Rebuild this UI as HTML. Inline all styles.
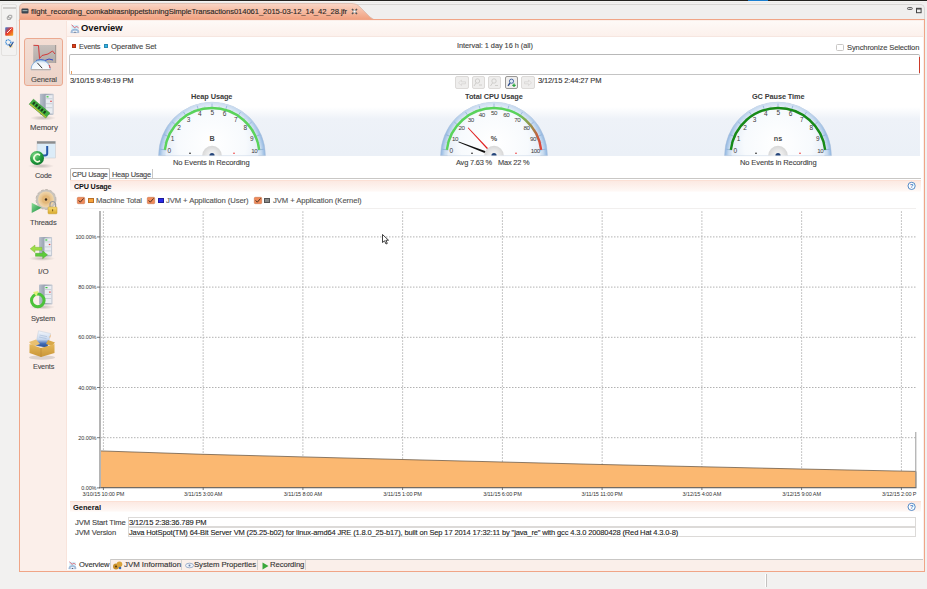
<!DOCTYPE html>
<html><head><meta charset="utf-8">
<style>
*{margin:0;padding:0;box-sizing:border-box}
html,body{width:927px;height:589px;overflow:hidden;background:#f2f1f0;font-family:"Liberation Sans",sans-serif}
.a{position:absolute}
.t{position:absolute;white-space:nowrap;line-height:1;font-family:"Liberation Sans",sans-serif}
svg{position:absolute;overflow:visible}
</style></head><body>
<div class="a" style="left:0px;top:0px;width:927px;height:589px;background:#f2f1f0"></div>
<div class="a" style="left:0px;top:0px;width:927px;height:1px;background:#23221f"></div>
<div class="a" style="left:0px;top:1px;width:927px;height:2px;background:linear-gradient(#f7f6f5,#e9e8e6)"></div>
<div class="a" style="left:748px;top:0px;width:20px;height:1px;background:#1b7fd0"></div>
<div class="a" style="left:1px;top:4px;width:16px;height:52px;background:#f3f2f1;border:1px solid #e3e1df;border-radius:2px"></div>
<div class="a" style="left:3px;top:7px;width:13px;height:1.5px;background:#cfcdcb"></div>
<svg class="a" style="left:1px;top:4px" width="17" height="52" viewBox="1 4 17 52"><rect x="7.3" y="16.6" width="3.4" height="2.8" rx="0.5" fill="none" stroke="#8a8a8a" stroke-width="0.8"/><rect x="8.6" y="15.3" width="3.2" height="2.6" rx="0.5" fill="#f3f2f1" stroke="#8a8a8a" stroke-width="0.8"/><defs><linearGradient id="mi2" x1="0" y1="0" x2="1" y2="1"><stop offset="0" stop-color="#2f7fe0"/><stop offset="0.45" stop-color="#e8342a"/><stop offset="1" stop-color="#f4b020"/></linearGradient></defs><rect x="5.2" y="27.3" width="8" height="8.5" rx="0.8" fill="url(#mi2)"/><path d="M7 33 L11.5 28.5" stroke="#fff" stroke-width="0.9"/><circle cx="8.3" cy="42.3" r="2.5" fill="none" stroke="#3a8ad8" stroke-width="1.4" stroke-dasharray="1.1 0.7"/><rect x="9" y="44" width="3.5" height="3.5" fill="#f3d070" fill-opacity="0.8"/><path d="M8.8 44.3 L10.5 46.6 L13.4 41.8" fill="none" stroke="#1f4fa0" stroke-width="1.1"/></svg>
<div class="a" style="left:19px;top:3.5px;width:905.5px;height:17px;background:#f0efee;border:1px solid #d8d6d4;border-bottom:none;border-radius:5px 5px 0 0"></div>
<svg class="a" style="left:19px;top:3px" width="360" height="18" viewBox="0 0 360 18"><defs><linearGradient id="tg" x1="0" y1="0" x2="0" y2="1"><stop offset="0" stop-color="#f9d6c6"/><stop offset="1" stop-color="#f09b78"/></linearGradient></defs><path d="M0.5 17 L0.5 5 Q0.5 0.5 5 0.5 L333 0.5 Q338 0.5 341 4 L351 14 Q354 17 358 17 L360 17 L360 18 L0 18 Z" fill="url(#tg)" stroke="#d9b7a8" stroke-width="0.8"/></svg>
<div class="a" style="left:19px;top:19px;width:905.5px;height:552.5px;border:1.5px solid #f0a587;background:#fbefea"></div>
<div class="a" style="left:20.5px;top:20.5px;width:46px;height:549.5px;background:#fbefea"></div>
<div class="a" style="left:65.8px;top:20.5px;width:857.2px;height:549.5px;background:#ffffff;border-left:1px solid #f8e4dc"></div>
<div class="a" style="left:67px;top:20.5px;width:856px;height:16px;background:linear-gradient(#fef9f7,#fcf1ec);border-bottom:1px solid #f6e6e0"></div>
<div class="t" style="left:80.50px;top:23px;font-size:9.5px;color:#111;font-weight:bold;letter-spacing:-0.037px;transform:scaleX(0.9893);transform-origin:0 0;">Overview</div>
<div class="t" style="left:31.00px;top:8px;font-size:8px;color:#2a2624;-webkit-text-stroke:0.12px #2a2624;letter-spacing:-0.103px;transform:scaleX(0.9589);transform-origin:0 0;">flight_recording_comkabirasnippetstuningSimpleTransactions014061_2015-03-12_14_42_28.jfr</div>
<svg class="a" style="left:351px;top:8px" width="7" height="7" viewBox="0 0 7 7"><path d="M1 1 L6 6 M6 1 L1 6" stroke="#555" stroke-width="1.6"/><rect x="2.3" y="2.3" width="2.4" height="2.4" fill="#fff"/></svg>
<svg class="a" style="left:21px;top:8px" width="8" height="6" viewBox="0 0 8 6"><rect x="0.5" y="0.5" width="7" height="5" rx="1" fill="#3a4550"/><rect x="1.5" y="2" width="5" height="1.2" fill="#9aa"/></svg>
<svg class="a" style="left:906px;top:6px" width="16" height="10" viewBox="0 0 16 10"><rect x="1.5" y="1.6" width="4.8" height="1.8" rx="0.8" fill="none" stroke="#555" stroke-width="1"/><rect x="10.5" y="2.3" width="4.6" height="4.4" fill="none" stroke="#444" stroke-width="1"/><rect x="10.5" y="2.3" width="4.6" height="1.2" fill="#444"/></svg>
<div class="a" style="left:23.5px;top:38px;width:39.5px;height:48px;background:linear-gradient(#f3ddd3,#ecd3c8);border:1px solid #eba990;border-radius:3px"></div>
<svg class="a" style="left:26px;top:40px" width="34" height="34" viewBox="26 40 34 34"><defs><linearGradient id="gg1" x1="0" y1="0" x2="0" y2="1"><stop offset="0" stop-color="#c7c0bc"/><stop offset="1" stop-color="#b3aba7"/></linearGradient><radialGradient id="gw" cx="0.5" cy="1" r="1"><stop offset="0" stop-color="#ffffff"/><stop offset="0.7" stop-color="#eef4fa"/><stop offset="1" stop-color="#9cc3e6"/></radialGradient></defs><rect x="33.2" y="45" width="22.8" height="18" fill="url(#gg1)"/><rect x="55" y="45" width="1.2" height="18" fill="#a29a96"/><polyline points="33.5,45.3 38.5,45.5 39.5,58.5 42,55.5 48,54 52.5,51 55,54" fill="none" stroke="#d23a3a" stroke-width="1"/><polyline points="36,60.5 41,59.5 45,60.5 49,59 53,60" fill="none" stroke="#3446c8" stroke-width="1"/><path d="M31 69.6 A9.7 9.7 0 0 1 50.4 69.6 Z" fill="url(#gw)" stroke="#6fa3d6" stroke-width="0.8"/><path d="M31 69.6 L50.4 69.6" stroke="#b8b0ac" stroke-width="1.2"/><line x1="37.3" y1="62.8" x2="42.2" y2="68.2" stroke="#333" stroke-width="1"/><path d="M49 65 A8.5 8.5 0 0 1 50 68" stroke="#d33" stroke-width="1" fill="none"/></svg>
<div class="t" style="left:30.90px;top:76px;font-size:8px;color:#4a4a4a;-webkit-text-stroke:0.12px #4a4a4a;letter-spacing:-0.146px;transform:scaleX(0.9440);transform-origin:0 0;">General</div>
<svg class="a" style="left:24px;top:88px" width="40" height="34" viewBox="24 88 40 34"><defs><linearGradient id="srv" x1="0" y1="0" x2="1" y2="0"><stop offset="0" stop-color="#b9c0cc"/><stop offset="0.4" stop-color="#9aa3b2"/><stop offset="1" stop-color="#c8cdd6"/></linearGradient><radialGradient id="shd" cx="0.5" cy="0.5" r="0.5"><stop offset="0" stop-color="#000" stop-opacity="0.22"/><stop offset="1" stop-color="#000" stop-opacity="0"/></radialGradient><radialGradient id="grn" cx="0.35" cy="0.3" r="0.8"><stop offset="0" stop-color="#7fd98a"/><stop offset="0.6" stop-color="#1f9a3c"/><stop offset="1" stop-color="#0d6e29"/></radialGradient></defs><ellipse cx="43" cy="118" rx="13" ry="2.5" fill="url(#shd)"/><rect x="39.9" y="93.7" width="13.8" height="21.2" rx="0.8" fill="url(#srv)"/><rect x="45.696" y="95.2" width="6.9" height="18.2" fill="#e9ecf1"/><rect x="46.524" y="96.2" width="2" height="1.2" fill="#39c23a"/><rect x="50.25" y="100.7" width="1.5" height="1.2" fill="#e04040"/><line x1="46.11" y1="98.7" x2="52.32" y2="98.7" stroke="#b5bcc8" stroke-width="0.6"/><line x1="46.11" y1="103.7" x2="52.32" y2="103.7" stroke="#b5bcc8" stroke-width="0.6"/><line x1="46.11" y1="107.7" x2="52.32" y2="107.7" stroke="#b5bcc8" stroke-width="0.6"/><g transform="rotate(40 39.6 108.3)"><rect x="29" y="105.3" width="21.5" height="6.5" fill="#3fae3f" stroke="#2a8a2a" stroke-width="0.5"/><rect x="31" y="106.6" width="2" height="3" fill="#1c3d1c"/><rect x="34.5" y="106.6" width="2" height="3" fill="#1c3d1c"/><rect x="38" y="106.6" width="2" height="3" fill="#1c3d1c"/><rect x="41.5" y="106.6" width="2" height="3" fill="#1c3d1c"/><rect x="45" y="106.6" width="2" height="3" fill="#1c3d1c"/><rect x="29.5" y="110.6" width="21" height="1" fill="#d8c23a"/></g></svg>
<div class="t" style="left:29.70px;top:124px;font-size:8px;color:#4a4a4a;-webkit-text-stroke:0.12px #4a4a4a;letter-spacing:-0.079px;transform:scaleX(0.9749);transform-origin:0 0;">Memory</div>
<svg class="a" style="left:24px;top:136px" width="40" height="34" viewBox="24 136 40 34"><defs><linearGradient id="srv2" x1="0" y1="0" x2="1" y2="0"><stop offset="0" stop-color="#b9c0cc"/><stop offset="0.4" stop-color="#9aa3b2"/><stop offset="1" stop-color="#c8cdd6"/></linearGradient><radialGradient id="shd" cx="0.5" cy="0.5" r="0.5"><stop offset="0" stop-color="#000" stop-opacity="0.22"/><stop offset="1" stop-color="#000" stop-opacity="0"/></radialGradient><radialGradient id="grn" cx="0.35" cy="0.3" r="0.8"><stop offset="0" stop-color="#7fd98a"/><stop offset="0.6" stop-color="#1f9a3c"/><stop offset="1" stop-color="#0d6e29"/></radialGradient></defs><ellipse cx="41" cy="166" rx="13" ry="2.5" fill="url(#shd)"/><rect x="37" y="141.3" width="18.4" height="16.7" fill="#dcecf8" stroke="#c4c8cc" stroke-width="0.5"/><rect x="37" y="141.3" width="18.4" height="2.4" fill="#8d8d8d"/><path d="M47.2 146 L47.2 153.5 Q47.2 155.5 45 155.5 L42 155.5" fill="none" stroke="#2558a8" stroke-width="2"/><circle cx="37" cy="158" r="7" fill="url(#grn)"/><path d="M40 155.3 A3.6 3.6 0 1 0 40 160.7" fill="none" stroke="#f2ffe0" stroke-width="1.6"/></svg>
<div class="t" style="left:34.60px;top:172px;font-size:8px;color:#4a4a4a;-webkit-text-stroke:0.12px #4a4a4a;letter-spacing:-0.242px;transform:scaleX(0.9199);transform-origin:0 0;">Code</div>
<svg class="a" style="left:24px;top:184px" width="40" height="34" viewBox="24 184 40 34"><defs><radialGradient id="gear" cx="0.5" cy="0.5" r="0.5"><stop offset="0" stop-color="#f4dcb0"/><stop offset="0.5" stop-color="#e6bf86"/><stop offset="1" stop-color="#f0d7ae"/></radialGradient><linearGradient id="tri" x1="0" y1="0" x2="1" y2="1"><stop offset="0" stop-color="#8fdf9a"/><stop offset="1" stop-color="#128838"/></linearGradient><linearGradient id="lock" x1="0" y1="0" x2="0" y2="1"><stop offset="0" stop-color="#f7dc7a"/><stop offset="1" stop-color="#d9a92a"/></linearGradient></defs><circle cx="46" cy="199.5" r="10" fill="#c9c4bd" stroke="#aaa39a" stroke-width="0.6" stroke-dasharray="3 1.6"/><circle cx="46" cy="199.5" r="8" fill="url(#gear)"/><circle cx="46" cy="199.5" r="4" fill="#e2b778"/><circle cx="46" cy="199.5" r="1.2" fill="#3a2a1a"/><path d="M31.7 202.7 L41.5 207.8 L31.7 212.9 Z" fill="url(#tri)"/><path d="M50 207 L50 204.3 A2.8 2.8 0 0 1 55.6 204.3 L55.6 207" fill="none" stroke="#9a9a9a" stroke-width="1.2"/><rect x="48" y="207" width="9" height="6.8" rx="0.8" fill="url(#lock)" stroke="#c49b2a" stroke-width="0.5"/><rect x="52.2" y="209.3" width="0.9" height="2" fill="#6a4a10"/></svg>
<div class="t" style="left:30.10px;top:219px;font-size:8px;color:#4a4a4a;-webkit-text-stroke:0.12px #4a4a4a;letter-spacing:-0.163px;transform:scaleX(0.9395);transform-origin:0 0;">Threads</div>
<svg class="a" style="left:24px;top:232px" width="40" height="34" viewBox="24 232 40 34"><defs><linearGradient id="srv3" x1="0" y1="0" x2="1" y2="0"><stop offset="0" stop-color="#b9c0cc"/><stop offset="0.4" stop-color="#9aa3b2"/><stop offset="1" stop-color="#c8cdd6"/></linearGradient><radialGradient id="shd3" cx="0.5" cy="0.5" r="0.5"><stop offset="0" stop-color="#000" stop-opacity="0.22"/><stop offset="1" stop-color="#000" stop-opacity="0"/></radialGradient><radialGradient id="grn3" cx="0.35" cy="0.3" r="0.8"><stop offset="0" stop-color="#7fd98a"/><stop offset="0.6" stop-color="#1f9a3c"/><stop offset="1" stop-color="#0d6e29"/></radialGradient></defs><ellipse cx="42" cy="258.5" rx="13" ry="2.5" fill="url(#shd3)"/><rect x="39" y="236.9" width="13.1" height="19.5" rx="0.8" fill="url(#srv3)"/><rect x="44.502" y="238.4" width="6.55" height="16.5" fill="#e9ecf1"/><rect x="45.288" y="239.4" width="2" height="1.2" fill="#39c23a"/><rect x="48.825" y="243.9" width="1.5" height="1.2" fill="#e04040"/><line x1="44.894999999999996" y1="241.9" x2="50.79" y2="241.9" stroke="#b5bcc8" stroke-width="0.6"/><line x1="44.894999999999996" y1="246.9" x2="50.79" y2="246.9" stroke="#b5bcc8" stroke-width="0.6"/><line x1="44.894999999999996" y1="250.9" x2="50.79" y2="250.9" stroke="#b5bcc8" stroke-width="0.6"/><path d="M30.2 248.8 L35 245 L35 247.3 L42 247.3 L42 250.3 L35 250.3 L35 252.6 Z" fill="#9edc48" stroke="#6db22a" stroke-width="0.4"/><path d="M47.5 254.8 L42.7 251 L42.7 253.3 L35.5 253.3 L35.5 256.3 L42.7 256.3 L42.7 258.6 Z" fill="#5ccc3a" stroke="#3e9e22" stroke-width="0.4"/></svg>
<div class="t" style="left:37.80px;top:268px;font-size:8px;color:#4a4a4a;-webkit-text-stroke:0.12px #4a4a4a;letter-spacing:-0.009px;transform:scaleX(0.9962);transform-origin:0 0;">I/O</div>
<svg class="a" style="left:24px;top:280px" width="40" height="34" viewBox="24 280 40 34"><defs><linearGradient id="srv4" x1="0" y1="0" x2="1" y2="0"><stop offset="0" stop-color="#b9c0cc"/><stop offset="0.4" stop-color="#9aa3b2"/><stop offset="1" stop-color="#c8cdd6"/></linearGradient><radialGradient id="shd4" cx="0.5" cy="0.5" r="0.5"><stop offset="0" stop-color="#000" stop-opacity="0.22"/><stop offset="1" stop-color="#000" stop-opacity="0"/></radialGradient><radialGradient id="grn4" cx="0.35" cy="0.3" r="0.8"><stop offset="0" stop-color="#7fd98a"/><stop offset="0.6" stop-color="#1f9a3c"/><stop offset="1" stop-color="#0d6e29"/></radialGradient></defs><ellipse cx="42" cy="307" rx="13" ry="2.5" fill="url(#shd4)"/><rect x="39" y="284.5" width="13.5" height="20" rx="0.8" fill="url(#srv4)"/><rect x="44.67" y="286.0" width="6.75" height="17" fill="#e9ecf1"/><rect x="45.48" y="287.0" width="2" height="1.2" fill="#39c23a"/><rect x="49.125" y="291.5" width="1.5" height="1.2" fill="#e04040"/><line x1="45.075" y1="289.5" x2="51.15" y2="289.5" stroke="#b5bcc8" stroke-width="0.6"/><line x1="45.075" y1="294.5" x2="51.15" y2="294.5" stroke="#b5bcc8" stroke-width="0.6"/><line x1="45.075" y1="298.5" x2="51.15" y2="298.5" stroke="#b5bcc8" stroke-width="0.6"/><circle cx="37.8" cy="300.4" r="6.3" fill="none" stroke="#4cc23a" stroke-width="3"/><path d="M33 292 L38.5 291 L36.5 296.5 Z" fill="#dff07a"/></svg>
<div class="t" style="left:30.90px;top:315px;font-size:8px;color:#4a4a4a;-webkit-text-stroke:0.12px #4a4a4a;letter-spacing:-0.171px;transform:scaleX(0.9398);transform-origin:0 0;">System</div>
<svg class="a" style="left:24px;top:328px" width="40" height="34" viewBox="24 328 40 34"><defs><linearGradient id="box" x1="0" y1="0" x2="0" y2="1"><stop offset="0" stop-color="#e6b85a"/><stop offset="1" stop-color="#c99637"/></linearGradient><linearGradient id="paper" x1="0" y1="0" x2="0" y2="1"><stop offset="0" stop-color="#f4f7fb"/><stop offset="0.5" stop-color="#c8d8ee"/><stop offset="0.75" stop-color="#3f6ab4"/><stop offset="1" stop-color="#24488c"/></linearGradient></defs><ellipse cx="42" cy="357.5" rx="13" ry="2.2" fill="#000" fill-opacity="0.12"/><path d="M38.5 330.8 L50.5 333.5 L47.5 348 L35.5 345.5 Z" fill="url(#paper)" stroke="#b8c4d4" stroke-width="0.4"/><path d="M39.5 335 L47 336.6 M39 337 L46.5 338.6" stroke="#9ab0d0" stroke-width="0.5"/><path d="M49.5 337 L51 334 L50 338 Z" fill="#f0a040"/><path d="M29 342 L36 339.5 L40 344 L33 346.5 Z" fill="#e9c070"/><path d="M48 340 L55 342.5 L52 346 L46 344 Z" fill="#d8a848"/><path d="M29.5 344 L41 348 L54.5 344 L54.5 353 L41 357 L29.5 353 Z" fill="url(#box)"/><path d="M41 348 L41 357" stroke="#b98530" stroke-width="0.6"/></svg>
<div class="t" style="left:32.60px;top:363px;font-size:8px;color:#4a4a4a;-webkit-text-stroke:0.12px #4a4a4a;letter-spacing:-0.224px;transform:scaleX(0.9129);transform-origin:0 0;">Events</div>
<svg class="a" style="left:69.5px;top:23.5px" width="10" height="10" viewBox="0 0 10 10"><rect x="1.5" y="1" width="7" height="5" fill="#d4f0fa"/><path d="M0.8 8.6 L1.6 6.2 Q5 3.6 8.4 6.2 L9 8.6 Z" fill="#a9c2de" stroke="#7f9fc8" stroke-width="0.5"/><path d="M2.3 8 Q5 5.6 7.7 8 Z" fill="#fff"/><polyline points="1.6,0.9 2.6,1.6 3.4,2.8 4.6,3.6 5.4,3.2 6.4,2.6 7.4,3 8.6,3.9" fill="none" stroke="#e05a6a" stroke-width="1"/><circle cx="5" cy="8.2" r="0.6" fill="#556"/></svg>
<div class="a" style="left:72px;top:44.3px;width:4.3px;height:4px;background:#e23d17;border:0.5px solid #a8331a"></div>
<div class="t" style="left:79.00px;top:43px;font-size:8px;color:#444;-webkit-text-stroke:0.12px #444;letter-spacing:-0.210px;transform:scaleX(0.9184);transform-origin:0 0;">Events</div>
<div class="a" style="left:104px;top:44.3px;width:4.3px;height:4px;background:#33b6e8;border:0.5px solid #2a88b0"></div>
<div class="t" style="left:110.80px;top:43px;font-size:8px;color:#444;-webkit-text-stroke:0.12px #444;letter-spacing:-0.111px;transform:scaleX(0.9544);transform-origin:0 0;">Operative Set</div>
<div class="t" style="left:456.80px;top:42px;font-size:7.5px;color:#444;-webkit-text-stroke:0.12px #444;letter-spacing:-0.039px;transform:scaleX(0.9801);transform-origin:0 0;">Interval: 1 day 16 h (all)</div>
<div class="a" style="left:836.2px;top:43.5px;width:7.5px;height:7.3px;background:#fff;border:1px solid #c9c7c5;border-radius:1.5px"></div>
<div class="t" style="left:846.80px;top:44px;font-size:8px;color:#444;-webkit-text-stroke:0.12px #444;letter-spacing:-0.132px;transform:scaleX(0.9454);transform-origin:0 0;">Synchronize Selection</div>
<div class="a" style="left:69.3px;top:53.8px;width:851px;height:20.8px;background:#fff;border:1.4px solid #c4c4c4;border-top:1.6px solid #b8b8b8;border-radius:2px"></div>
<div class="a" style="left:70.5px;top:71px;width:1px;height:2.5px;background:#e8a060"></div>
<div class="a" style="left:918.5px;top:57px;width:1.2px;height:16px;background:#cc3a2a"></div>
<div class="t" style="left:70.00px;top:77px;font-size:8px;color:#333;-webkit-text-stroke:0.12px #333;letter-spacing:-0.141px;transform:scaleX(0.9436);transform-origin:0 0;">3/10/15 9:49:19 PM</div>
<div class="a" style="left:455.2px;top:76.3px;width:13.4px;height:13px;background:#eeedec;border:1px solid #dcdad8;border-radius:2px"></div>
<div class="a" style="left:471.6px;top:76.3px;width:13.4px;height:13px;background:#eeedec;border:1px solid #dcdad8;border-radius:2px"></div>
<div class="a" style="left:488px;top:76.3px;width:13.4px;height:13px;background:#eeedec;border:1px solid #dcdad8;border-radius:2px"></div>
<div class="a" style="left:504.9px;top:76.3px;width:13.4px;height:13px;background:#eeedec;border:1px solid #9a9896;border-radius:2px"></div>
<div class="a" style="left:521.3px;top:76.3px;width:13.4px;height:13px;background:#eeedec;border:1px solid #dcdad8;border-radius:2px"></div>
<svg class="a" style="left:455px;top:76px" width="80" height="14" viewBox="455 76 80 14"><path d="M458.5 82.8 L461.5 80 L461.5 81.8 L465.5 81.8 L465.5 83.8 L461.5 83.8 L461.5 85.6 Z" fill="none" stroke="#d8d6d4" stroke-width="0.8"/><circle cx="477.5" cy="81" r="2.2" fill="none" stroke="#c8c6c4" stroke-width="0.8"/><path d="M476 83 L474 86 M479 85 L482 85" stroke="#c8c6c4" stroke-width="0.8"/><circle cx="494" cy="81" r="2.2" fill="none" stroke="#c8c6c4" stroke-width="0.8"/><path d="M492.5 83 L490.5 86 M495 85.5 L498 85.5" stroke="#c8c6c4" stroke-width="0.8"/><circle cx="511.5" cy="81.2" r="2.1" fill="#dfe9f6" stroke="#3a5a9a" stroke-width="0.9"/><path d="M510 83 L508 85.8" stroke="#2a4a8a" stroke-width="1.3"/><path d="M512.3 85.3 L515.7 85.3 M514 83.6 L514 87" stroke="#2aa640" stroke-width="1.3"/><path d="M531.5 82.8 L528.5 80 L528.5 81.8 L524.5 81.8 L524.5 83.8 L528.5 83.8 L528.5 85.6 Z" fill="none" stroke="#d8d6d4" stroke-width="0.8"/></svg>
<div class="t" style="left:537.70px;top:77px;font-size:8px;color:#333;-webkit-text-stroke:0.12px #333;letter-spacing:-0.145px;transform:scaleX(0.9418);transform-origin:0 0;">3/12/15 2:44:27 PM</div>
<div class="a" style="left:70px;top:107px;width:850px;height:49px;background:linear-gradient(#ffffff 0px,#eef2f8 12px,#ebf0f7 48px)"></div>
<svg class="a" style="left:151.5px;top:90px" width="120" height="66" viewBox="151.5 90 120 66"><defs><radialGradient id="ringg211" cx="211.5" cy="155.6" r="53.4" gradientUnits="userSpaceOnUse"><stop offset="0.80" stop-color="#eaf1f9"/><stop offset="0.92" stop-color="#c9dcf0"/><stop offset="1" stop-color="#8db4e0"/></radialGradient><linearGradient id="ringhlg211" x1="0" y1="102.19999999999999" x2="0" y2="155.6" gradientUnits="userSpaceOnUse"><stop offset="0" stop-color="#ffffff" stop-opacity="0.55"/><stop offset="0.6" stop-color="#ffffff" stop-opacity="0"/></linearGradient><radialGradient id="faceg211" cx="211.5" cy="143.6" r="45.39" gradientUnits="userSpaceOnUse"><stop offset="0" stop-color="#ffffff"/><stop offset="0.75" stop-color="#f7fafd"/><stop offset="1" stop-color="#e8eff8"/></radialGradient></defs><path d="M158.1 155.6 A53.4 53.4 0 0 1 264.9 155.6 Z" fill="url(#ringg211)" stroke="#aabfd8" stroke-width="0.5"/><path d="M158.1 155.6 A53.4 53.4 0 0 1 264.9 155.6 Z" fill="url(#ringhlg211)"/><path d="M165.1 155.6 A46.4 46.4 0 0 1 257.9 155.6 Z" fill="url(#faceg211)"/><line x1="165.84" y1="149.99" x2="159.89" y2="149.26" stroke="#7d9fd0" stroke-width="0.6"/><line x1="166.17" y1="143.20" x2="163.27" y2="142.41" stroke="#9db7dc" stroke-width="0.4"/><line x1="169.35" y1="137.18" x2="163.85" y2="134.78" stroke="#7d9fd0" stroke-width="0.6"/><line x1="171.60" y1="130.76" x2="169.05" y2="129.18" stroke="#9db7dc" stroke-width="0.4"/><line x1="176.37" y1="125.91" x2="171.78" y2="122.04" stroke="#7d9fd0" stroke-width="0.6"/><line x1="180.36" y1="120.40" x2="178.37" y2="118.15" stroke="#9db7dc" stroke-width="0.4"/><line x1="186.31" y1="117.11" x2="183.03" y2="112.09" stroke="#7d9fd0" stroke-width="0.6"/><line x1="191.71" y1="112.97" x2="190.45" y2="110.25" stroke="#9db7dc" stroke-width="0.4"/><line x1="198.36" y1="111.52" x2="196.64" y2="105.77" stroke="#7d9fd0" stroke-width="0.6"/><line x1="204.72" y1="109.09" x2="204.28" y2="106.12" stroke="#9db7dc" stroke-width="0.4"/><line x1="211.50" y1="109.60" x2="211.50" y2="103.60" stroke="#7d9fd0" stroke-width="0.6"/><line x1="218.28" y1="109.09" x2="218.72" y2="106.12" stroke="#9db7dc" stroke-width="0.4"/><line x1="224.64" y1="111.52" x2="226.36" y2="105.77" stroke="#7d9fd0" stroke-width="0.6"/><line x1="231.29" y1="112.97" x2="232.55" y2="110.25" stroke="#9db7dc" stroke-width="0.4"/><line x1="236.69" y1="117.11" x2="239.97" y2="112.09" stroke="#7d9fd0" stroke-width="0.6"/><line x1="242.64" y1="120.40" x2="244.63" y2="118.15" stroke="#9db7dc" stroke-width="0.4"/><line x1="246.63" y1="125.91" x2="251.22" y2="122.04" stroke="#7d9fd0" stroke-width="0.6"/><line x1="251.40" y1="130.76" x2="253.95" y2="129.18" stroke="#9db7dc" stroke-width="0.4"/><line x1="253.65" y1="137.18" x2="259.15" y2="134.78" stroke="#7d9fd0" stroke-width="0.6"/><line x1="256.83" y1="143.20" x2="259.73" y2="142.41" stroke="#9db7dc" stroke-width="0.4"/><line x1="257.16" y1="149.99" x2="263.11" y2="149.26" stroke="#7d9fd0" stroke-width="0.6"/><path d="M164.35 149.81 A47.5 47.5 0 0 1 258.65 149.81" fill="none" stroke="#5ad35a" stroke-width="2.4"/><text x="168.52" y="152.62" font-size="6.5" text-anchor="middle" fill="#3a3a3a" font-family="Liberation Sans" letter-spacing="-0.45">0</text><text x="171.82" y="140.56" font-size="6.5" text-anchor="middle" fill="#3a3a3a" font-family="Liberation Sans" letter-spacing="-0.45">1</text><text x="178.43" y="129.95" font-size="6.5" text-anchor="middle" fill="#3a3a3a" font-family="Liberation Sans" letter-spacing="-0.45">2</text><text x="187.79" y="121.67" font-size="6.5" text-anchor="middle" fill="#3a3a3a" font-family="Liberation Sans" letter-spacing="-0.45">3</text><text x="199.13" y="116.40" font-size="6.5" text-anchor="middle" fill="#3a3a3a" font-family="Liberation Sans" letter-spacing="-0.45">4</text><text x="211.50" y="114.60" font-size="6.5" text-anchor="middle" fill="#3a3a3a" font-family="Liberation Sans" letter-spacing="-0.45">5</text><text x="223.87" y="116.40" font-size="6.5" text-anchor="middle" fill="#3a3a3a" font-family="Liberation Sans" letter-spacing="-0.45">6</text><text x="235.21" y="121.67" font-size="6.5" text-anchor="middle" fill="#3a3a3a" font-family="Liberation Sans" letter-spacing="-0.45">7</text><text x="244.57" y="129.95" font-size="6.5" text-anchor="middle" fill="#3a3a3a" font-family="Liberation Sans" letter-spacing="-0.45">8</text><text x="251.18" y="140.56" font-size="6.5" text-anchor="middle" fill="#3a3a3a" font-family="Liberation Sans" letter-spacing="-0.45">9</text><text x="253.68" y="152.72" font-size="6.2" text-anchor="middle" fill="#3a3a3a" font-family="Liberation Sans" letter-spacing="-0.45">10</text><text x="211.5" y="140.79999999999998" font-size="7.2" font-weight="bold" text-anchor="middle" fill="#4a4a4a" font-family="Liberation Sans">B</text><circle cx="189.5" cy="153.2" r="0.8" fill="#111"/><circle cx="233.5" cy="153.2" r="0.8" fill="#e33"/><defs><radialGradient id="hubg211" cx="211.5" cy="155.6" r="10" gradientUnits="userSpaceOnUse"><stop offset="0" stop-color="#fafafa"/><stop offset="0.6" stop-color="#e6e6e6"/><stop offset="1" stop-color="#d6d6d6"/></radialGradient></defs><path d="M201.7 155.6 A9.8 9.8 0 0 1 221.3 155.6 Z" fill="url(#hubg211)"/><path d="M208.9 155.6 A2.6 2.6 0 0 1 214.1 155.6 Z" fill="#25457a"/></svg>
<div class="t" style="left:190.80px;top:93px;font-size:7.6px;color:#3a3a3a;font-weight:bold;letter-spacing:-0.084px;transform:scaleX(0.9704);transform-origin:0 0;">Heap Usage</div>
<div class="t" style="left:173.25px;top:159px;font-size:8px;color:#444;-webkit-text-stroke:0.12px #444;letter-spacing:-0.137px;transform:scaleX(0.9442);transform-origin:0 0;">No Events in Recording</div>
<svg class="a" style="left:434.3px;top:90px" width="120" height="66" viewBox="434.3 90 120 66"><defs><radialGradient id="ringg494" cx="494.3" cy="155.6" r="53.4" gradientUnits="userSpaceOnUse"><stop offset="0.80" stop-color="#eaf1f9"/><stop offset="0.92" stop-color="#c9dcf0"/><stop offset="1" stop-color="#8db4e0"/></radialGradient><linearGradient id="ringhlg494" x1="0" y1="102.19999999999999" x2="0" y2="155.6" gradientUnits="userSpaceOnUse"><stop offset="0" stop-color="#ffffff" stop-opacity="0.55"/><stop offset="0.6" stop-color="#ffffff" stop-opacity="0"/></linearGradient><radialGradient id="faceg494" cx="494.3" cy="143.6" r="45.39" gradientUnits="userSpaceOnUse"><stop offset="0" stop-color="#ffffff"/><stop offset="0.75" stop-color="#f7fafd"/><stop offset="1" stop-color="#e8eff8"/></radialGradient></defs><path d="M440.90000000000003 155.6 A53.4 53.4 0 0 1 547.7 155.6 Z" fill="url(#ringg494)" stroke="#aabfd8" stroke-width="0.5"/><path d="M440.90000000000003 155.6 A53.4 53.4 0 0 1 547.7 155.6 Z" fill="url(#ringhlg494)"/><path d="M447.90000000000003 155.6 A46.4 46.4 0 0 1 540.7 155.6 Z" fill="url(#faceg494)"/><line x1="448.64" y1="149.99" x2="442.69" y2="149.26" stroke="#7d9fd0" stroke-width="0.6"/><line x1="448.97" y1="143.20" x2="446.07" y2="142.41" stroke="#9db7dc" stroke-width="0.4"/><line x1="452.15" y1="137.18" x2="446.65" y2="134.78" stroke="#7d9fd0" stroke-width="0.6"/><line x1="454.40" y1="130.76" x2="451.85" y2="129.18" stroke="#9db7dc" stroke-width="0.4"/><line x1="459.17" y1="125.91" x2="454.58" y2="122.04" stroke="#7d9fd0" stroke-width="0.6"/><line x1="463.16" y1="120.40" x2="461.17" y2="118.15" stroke="#9db7dc" stroke-width="0.4"/><line x1="469.11" y1="117.11" x2="465.83" y2="112.09" stroke="#7d9fd0" stroke-width="0.6"/><line x1="474.51" y1="112.97" x2="473.25" y2="110.25" stroke="#9db7dc" stroke-width="0.4"/><line x1="481.16" y1="111.52" x2="479.44" y2="105.77" stroke="#7d9fd0" stroke-width="0.6"/><line x1="487.52" y1="109.09" x2="487.08" y2="106.12" stroke="#9db7dc" stroke-width="0.4"/><line x1="494.30" y1="109.60" x2="494.30" y2="103.60" stroke="#7d9fd0" stroke-width="0.6"/><line x1="501.08" y1="109.09" x2="501.52" y2="106.12" stroke="#9db7dc" stroke-width="0.4"/><line x1="507.44" y1="111.52" x2="509.16" y2="105.77" stroke="#7d9fd0" stroke-width="0.6"/><line x1="514.09" y1="112.97" x2="515.35" y2="110.25" stroke="#9db7dc" stroke-width="0.4"/><line x1="519.49" y1="117.11" x2="522.77" y2="112.09" stroke="#7d9fd0" stroke-width="0.6"/><line x1="525.44" y1="120.40" x2="527.43" y2="118.15" stroke="#9db7dc" stroke-width="0.4"/><line x1="529.43" y1="125.91" x2="534.02" y2="122.04" stroke="#7d9fd0" stroke-width="0.6"/><line x1="534.20" y1="130.76" x2="536.75" y2="129.18" stroke="#9db7dc" stroke-width="0.4"/><line x1="536.45" y1="137.18" x2="541.95" y2="134.78" stroke="#7d9fd0" stroke-width="0.6"/><line x1="539.63" y1="143.20" x2="542.53" y2="142.41" stroke="#9db7dc" stroke-width="0.4"/><line x1="539.96" y1="149.99" x2="545.91" y2="149.26" stroke="#7d9fd0" stroke-width="0.6"/><defs><linearGradient id="arcgg494" x1="446.8" y1="0" x2="541.8" y2="0" gradientUnits="userSpaceOnUse"><stop offset="0" stop-color="#5ad35a"/><stop offset="0.74" stop-color="#5ad35a"/><stop offset="0.9" stop-color="#a08a48"/><stop offset="1" stop-color="#e04038"/></linearGradient></defs><path d="M447.15 149.81 A47.5 47.5 0 0 1 541.45 149.81" fill="none" stroke="url(#arcgg494)" stroke-width="2.4"/><text x="451.32" y="152.62" font-size="6.5" text-anchor="middle" fill="#3a3a3a" font-family="Liberation Sans" letter-spacing="-0.45">0</text><text x="455.35" y="140.89" font-size="6.2" text-anchor="middle" fill="#3a3a3a" font-family="Liberation Sans" letter-spacing="-0.45">10</text><text x="461.84" y="130.47" font-size="6.2" text-anchor="middle" fill="#3a3a3a" font-family="Liberation Sans" letter-spacing="-0.45">20</text><text x="471.03" y="122.34" font-size="6.2" text-anchor="middle" fill="#3a3a3a" font-family="Liberation Sans" letter-spacing="-0.45">30</text><text x="482.16" y="117.17" font-size="6.2" text-anchor="middle" fill="#3a3a3a" font-family="Liberation Sans" letter-spacing="-0.45">40</text><text x="494.30" y="115.40" font-size="6.2" text-anchor="middle" fill="#3a3a3a" font-family="Liberation Sans" letter-spacing="-0.45">50</text><text x="506.44" y="117.17" font-size="6.2" text-anchor="middle" fill="#3a3a3a" font-family="Liberation Sans" letter-spacing="-0.45">60</text><text x="517.57" y="122.34" font-size="6.2" text-anchor="middle" fill="#3a3a3a" font-family="Liberation Sans" letter-spacing="-0.45">70</text><text x="526.76" y="130.47" font-size="6.2" text-anchor="middle" fill="#3a3a3a" font-family="Liberation Sans" letter-spacing="-0.45">80</text><text x="533.25" y="140.89" font-size="6.2" text-anchor="middle" fill="#3a3a3a" font-family="Liberation Sans" letter-spacing="-0.45">90</text><text x="535.49" y="152.84" font-size="6.2" text-anchor="middle" fill="#3a3a3a" font-family="Liberation Sans" letter-spacing="-0.45">100</text><text x="494.3" y="140.79999999999998" font-size="7.2" font-weight="bold" text-anchor="middle" fill="#4a4a4a" font-family="Liberation Sans">%</text><circle cx="472.3" cy="153.2" r="0.8" fill="#111"/><circle cx="516.3" cy="153.2" r="0.8" fill="#e33"/><path d="M488.16 152.06 L458.97 141.61 L458.68 142.36 L487.37 154.12 Z" fill="#111"/><path d="M488.64 148.57 L468.71 127.50 L468.05 128.12 L487.69 149.46 Z" fill="#e02020"/><defs><radialGradient id="hubg494" cx="494.3" cy="155.6" r="10" gradientUnits="userSpaceOnUse"><stop offset="0" stop-color="#fafafa"/><stop offset="0.6" stop-color="#e6e6e6"/><stop offset="1" stop-color="#d6d6d6"/></radialGradient></defs><path d="M484.5 155.6 A9.8 9.8 0 0 1 504.1 155.6 Z" fill="url(#hubg494)"/><path d="M491.7 155.6 A2.6 2.6 0 0 1 496.90000000000003 155.6 Z" fill="#25457a"/></svg>
<div class="t" style="left:465.40px;top:93px;font-size:7.6px;color:#3a3a3a;font-weight:bold;letter-spacing:-0.076px;transform:scaleX(0.9711);transform-origin:0 0;">Total CPU Usage</div>
<div class="t" style="left:456.00px;top:159px;font-size:8px;color:#444;-webkit-text-stroke:0.12px #444;letter-spacing:-0.195px;transform:scaleX(0.9248);transform-origin:0 0;">Avg 7.63 %</div>
<div class="t" style="left:497.70px;top:159px;font-size:8px;color:#444;-webkit-text-stroke:0.12px #444;letter-spacing:-0.213px;transform:scaleX(0.9244);transform-origin:0 0;">Max 22 %</div>
<svg class="a" style="left:718px;top:90px" width="120" height="66" viewBox="718 90 120 66"><defs><radialGradient id="ringg778" cx="778" cy="155.6" r="53.4" gradientUnits="userSpaceOnUse"><stop offset="0.80" stop-color="#eaf1f9"/><stop offset="0.92" stop-color="#c9dcf0"/><stop offset="1" stop-color="#8db4e0"/></radialGradient><linearGradient id="ringhlg778" x1="0" y1="102.19999999999999" x2="0" y2="155.6" gradientUnits="userSpaceOnUse"><stop offset="0" stop-color="#ffffff" stop-opacity="0.55"/><stop offset="0.6" stop-color="#ffffff" stop-opacity="0"/></linearGradient><radialGradient id="faceg778" cx="778" cy="143.6" r="45.39" gradientUnits="userSpaceOnUse"><stop offset="0" stop-color="#ffffff"/><stop offset="0.75" stop-color="#f7fafd"/><stop offset="1" stop-color="#e8eff8"/></radialGradient></defs><path d="M724.6 155.6 A53.4 53.4 0 0 1 831.4 155.6 Z" fill="url(#ringg778)" stroke="#aabfd8" stroke-width="0.5"/><path d="M724.6 155.6 A53.4 53.4 0 0 1 831.4 155.6 Z" fill="url(#ringhlg778)"/><path d="M731.6 155.6 A46.4 46.4 0 0 1 824.4 155.6 Z" fill="url(#faceg778)"/><line x1="732.34" y1="149.99" x2="726.39" y2="149.26" stroke="#7d9fd0" stroke-width="0.6"/><line x1="732.67" y1="143.20" x2="729.77" y2="142.41" stroke="#9db7dc" stroke-width="0.4"/><line x1="735.85" y1="137.18" x2="730.35" y2="134.78" stroke="#7d9fd0" stroke-width="0.6"/><line x1="738.10" y1="130.76" x2="735.55" y2="129.18" stroke="#9db7dc" stroke-width="0.4"/><line x1="742.87" y1="125.91" x2="738.28" y2="122.04" stroke="#7d9fd0" stroke-width="0.6"/><line x1="746.86" y1="120.40" x2="744.87" y2="118.15" stroke="#9db7dc" stroke-width="0.4"/><line x1="752.81" y1="117.11" x2="749.53" y2="112.09" stroke="#7d9fd0" stroke-width="0.6"/><line x1="758.21" y1="112.97" x2="756.95" y2="110.25" stroke="#9db7dc" stroke-width="0.4"/><line x1="764.86" y1="111.52" x2="763.14" y2="105.77" stroke="#7d9fd0" stroke-width="0.6"/><line x1="771.22" y1="109.09" x2="770.78" y2="106.12" stroke="#9db7dc" stroke-width="0.4"/><line x1="778.00" y1="109.60" x2="778.00" y2="103.60" stroke="#7d9fd0" stroke-width="0.6"/><line x1="784.78" y1="109.09" x2="785.22" y2="106.12" stroke="#9db7dc" stroke-width="0.4"/><line x1="791.14" y1="111.52" x2="792.86" y2="105.77" stroke="#7d9fd0" stroke-width="0.6"/><line x1="797.79" y1="112.97" x2="799.05" y2="110.25" stroke="#9db7dc" stroke-width="0.4"/><line x1="803.19" y1="117.11" x2="806.47" y2="112.09" stroke="#7d9fd0" stroke-width="0.6"/><line x1="809.14" y1="120.40" x2="811.13" y2="118.15" stroke="#9db7dc" stroke-width="0.4"/><line x1="813.13" y1="125.91" x2="817.72" y2="122.04" stroke="#7d9fd0" stroke-width="0.6"/><line x1="817.90" y1="130.76" x2="820.45" y2="129.18" stroke="#9db7dc" stroke-width="0.4"/><line x1="820.15" y1="137.18" x2="825.65" y2="134.78" stroke="#7d9fd0" stroke-width="0.6"/><line x1="823.33" y1="143.20" x2="826.23" y2="142.41" stroke="#9db7dc" stroke-width="0.4"/><line x1="823.66" y1="149.99" x2="829.61" y2="149.26" stroke="#7d9fd0" stroke-width="0.6"/><path d="M730.85 149.81 A47.5 47.5 0 0 1 825.15 149.81" fill="none" stroke="#178a17" stroke-width="2.4"/><text x="735.02" y="152.62" font-size="6.5" text-anchor="middle" fill="#3a3a3a" font-family="Liberation Sans" letter-spacing="-0.45">0</text><text x="738.32" y="140.56" font-size="6.5" text-anchor="middle" fill="#3a3a3a" font-family="Liberation Sans" letter-spacing="-0.45">1</text><text x="744.93" y="129.95" font-size="6.5" text-anchor="middle" fill="#3a3a3a" font-family="Liberation Sans" letter-spacing="-0.45">2</text><text x="754.29" y="121.67" font-size="6.5" text-anchor="middle" fill="#3a3a3a" font-family="Liberation Sans" letter-spacing="-0.45">3</text><text x="765.63" y="116.40" font-size="6.5" text-anchor="middle" fill="#3a3a3a" font-family="Liberation Sans" letter-spacing="-0.45">4</text><text x="778.00" y="114.60" font-size="6.5" text-anchor="middle" fill="#3a3a3a" font-family="Liberation Sans" letter-spacing="-0.45">5</text><text x="790.37" y="116.40" font-size="6.5" text-anchor="middle" fill="#3a3a3a" font-family="Liberation Sans" letter-spacing="-0.45">6</text><text x="801.71" y="121.67" font-size="6.5" text-anchor="middle" fill="#3a3a3a" font-family="Liberation Sans" letter-spacing="-0.45">7</text><text x="811.07" y="129.95" font-size="6.5" text-anchor="middle" fill="#3a3a3a" font-family="Liberation Sans" letter-spacing="-0.45">8</text><text x="817.68" y="140.56" font-size="6.5" text-anchor="middle" fill="#3a3a3a" font-family="Liberation Sans" letter-spacing="-0.45">9</text><text x="820.18" y="152.72" font-size="6.2" text-anchor="middle" fill="#3a3a3a" font-family="Liberation Sans" letter-spacing="-0.45">10</text><text x="778" y="140.79999999999998" font-size="7.2" font-weight="bold" text-anchor="middle" fill="#4a4a4a" font-family="Liberation Sans">ns</text><circle cx="756" cy="153.2" r="0.8" fill="#111"/><circle cx="800" cy="153.2" r="0.8" fill="#e33"/><defs><radialGradient id="hubg778" cx="778" cy="155.6" r="10" gradientUnits="userSpaceOnUse"><stop offset="0" stop-color="#fafafa"/><stop offset="0.6" stop-color="#e6e6e6"/><stop offset="1" stop-color="#d6d6d6"/></radialGradient></defs><path d="M768.2 155.6 A9.8 9.8 0 0 1 787.8 155.6 Z" fill="url(#hubg778)"/><path d="M775.4 155.6 A2.6 2.6 0 0 1 780.6 155.6 Z" fill="#25457a"/></svg>
<div class="t" style="left:751.75px;top:93px;font-size:7.6px;color:#3a3a3a;font-weight:bold;letter-spacing:-0.096px;transform:scaleX(0.9656);transform-origin:0 0;">GC Pause Time</div>
<div class="t" style="left:739.75px;top:159px;font-size:8px;color:#444;-webkit-text-stroke:0.12px #444;letter-spacing:-0.137px;transform:scaleX(0.9442);transform-origin:0 0;">No Events in Recording</div>
<div class="a" style="left:110px;top:178px;width:810.5px;height:1px;background:#c9c7c5"></div>
<div class="a" style="left:70px;top:168px;width:40px;height:11.5px;background:#fff;border:1px solid #bdbbb9;border-bottom:none;border-radius:2px 2px 0 0"></div>
<div class="t" style="left:71.90px;top:171px;font-size:8px;color:#444;-webkit-text-stroke:0.12px #444;letter-spacing:-0.295px;transform:scaleX(0.8994);transform-origin:0 0;">CPU Usage</div>
<div class="a" style="left:152.3px;top:169px;width:1px;height:10px;background:#c9c7c5"></div>
<div class="t" style="left:111.80px;top:171px;font-size:8px;color:#444;-webkit-text-stroke:0.12px #444;letter-spacing:-0.223px;transform:scaleX(0.9209);transform-origin:0 0;">Heap Usage</div>
<div class="a" style="left:70px;top:179.5px;width:850.5px;height:12.5px;background:linear-gradient(#fce9e2,#fef7f4 85%,#fffdfc);border-top:1px solid #fbe0d5"></div>
<div class="t" style="left:73.80px;top:183px;font-size:7.6px;color:#111;font-weight:bold;letter-spacing:-0.154px;transform:scaleX(0.9474);transform-origin:0 0;">CPU Usage</div>
<svg class="a" style="left:907px;top:181px" width="10" height="10" viewBox="0 0 10 10"><circle cx="4.6" cy="4.9" r="3.6" fill="#fff" stroke="#3f7cc0" stroke-width="0.9"/><text x="4.6" y="7.2" font-size="6" font-weight="bold" text-anchor="middle" fill="#3f7cc0" font-family="Liberation Sans">?</text></svg>
<svg class="a" style="left:77px;top:197.4px" width="8" height="7" viewBox="0 0 8 7"><rect x="0.3" y="0.3" width="7.4" height="6.4" rx="1" fill="#f08a5a" stroke="#c06a40" stroke-width="0.5"/><path d="M1.6 3.4 L3.3 5.2 L6.6 1.4" fill="none" stroke="#3a2a20" stroke-width="0.9"/></svg>
<div class="a" style="left:87.7px;top:197.6px;width:6px;height:5.6px;background:#f7a23a;border:0.8px solid #b8702a"></div>
<div class="t" style="left:95.80px;top:197px;font-size:8px;color:#555;-webkit-text-stroke:0.12px #555;letter-spacing:-0.102px;transform:scaleX(0.9585);transform-origin:0 0;">Machine Total</div>
<svg class="a" style="left:147.3px;top:197.4px" width="8" height="7" viewBox="0 0 8 7"><rect x="0.3" y="0.3" width="7.4" height="6.4" rx="1" fill="#f08a5a" stroke="#c06a40" stroke-width="0.5"/><path d="M1.6 3.4 L3.3 5.2 L6.6 1.4" fill="none" stroke="#3a2a20" stroke-width="0.9"/></svg>
<div class="a" style="left:157.8px;top:197.6px;width:6px;height:5.6px;background:#2a2ae8;border:0.8px solid #1a1a9a"></div>
<div class="t" style="left:165.80px;top:197px;font-size:8px;color:#555;-webkit-text-stroke:0.12px #555;letter-spacing:-0.096px;transform:scaleX(0.9599);transform-origin:0 0;">JVM + Application (User)</div>
<svg class="a" style="left:254px;top:197.4px" width="8" height="7" viewBox="0 0 8 7"><rect x="0.3" y="0.3" width="7.4" height="6.4" rx="1" fill="#f08a5a" stroke="#c06a40" stroke-width="0.5"/><path d="M1.6 3.4 L3.3 5.2 L6.6 1.4" fill="none" stroke="#3a2a20" stroke-width="0.9"/></svg>
<div class="a" style="left:264.4px;top:197.6px;width:6px;height:5.6px;background:#8a8a8a;border:0.8px solid #555"></div>
<div class="t" style="left:272.50px;top:197px;font-size:8px;color:#555;-webkit-text-stroke:0.12px #555;letter-spacing:-0.092px;transform:scaleX(0.9610);transform-origin:0 0;">JVM + Application (Kernel)</div>
<div class="a" style="left:74px;top:207.5px;width:842px;height:1px;background:#f1efee"></div>
<svg class="a" style="left:66px;top:205px" width="860" height="295" viewBox="66 205 860 295"><line x1="103.40" y1="211.3" x2="103.40" y2="487.5" stroke="#b2b2b2" stroke-width="1" stroke-dasharray="1.5 1.5"/><line x1="203.15" y1="211.3" x2="203.15" y2="487.5" stroke="#b2b2b2" stroke-width="1" stroke-dasharray="1.5 1.5"/><line x1="302.90" y1="211.3" x2="302.90" y2="487.5" stroke="#b2b2b2" stroke-width="1" stroke-dasharray="1.5 1.5"/><line x1="402.65" y1="211.3" x2="402.65" y2="487.5" stroke="#b2b2b2" stroke-width="1" stroke-dasharray="1.5 1.5"/><line x1="502.40" y1="211.3" x2="502.40" y2="487.5" stroke="#b2b2b2" stroke-width="1" stroke-dasharray="1.5 1.5"/><line x1="602.15" y1="211.3" x2="602.15" y2="487.5" stroke="#b2b2b2" stroke-width="1" stroke-dasharray="1.5 1.5"/><line x1="701.90" y1="211.3" x2="701.90" y2="487.5" stroke="#b2b2b2" stroke-width="1" stroke-dasharray="1.5 1.5"/><line x1="801.65" y1="211.3" x2="801.65" y2="487.5" stroke="#b2b2b2" stroke-width="1" stroke-dasharray="1.5 1.5"/><line x1="901.40" y1="211.3" x2="901.40" y2="487.5" stroke="#b2b2b2" stroke-width="1" stroke-dasharray="1.5 1.5"/><line x1="101" y1="236.90" x2="916" y2="236.90" stroke="#b2b2b2" stroke-width="1" stroke-dasharray="1.5 1.5"/><line x1="101" y1="287.10" x2="916" y2="287.10" stroke="#b2b2b2" stroke-width="1" stroke-dasharray="1.5 1.5"/><line x1="101" y1="337.30" x2="916" y2="337.30" stroke="#b2b2b2" stroke-width="1" stroke-dasharray="1.5 1.5"/><line x1="101" y1="387.50" x2="916" y2="387.50" stroke="#b2b2b2" stroke-width="1" stroke-dasharray="1.5 1.5"/><line x1="101" y1="437.70" x2="916" y2="437.70" stroke="#b2b2b2" stroke-width="1" stroke-dasharray="1.5 1.5"/><path d="M100 450.9 L203 454.3 L402 459.5 L602 464.5 L801 469 L916 471.4 L916 487.5 L100 487.5 Z" fill="#fbb871" stroke="#5a4a3a" stroke-width="0.7"/><line x1="915.8" y1="432" x2="915.8" y2="487.5" stroke="#9a9a9a" stroke-width="1"/><rect x="99" y="211" width="2" height="277" fill="#b4b4b4"/><line x1="99" y1="487.8" x2="916.5" y2="487.8" stroke="#666" stroke-width="0.9"/><line x1="97" y1="236.9" x2="100" y2="236.9" stroke="#555" stroke-width="0.8"/><text x="96.4" y="238.9" font-size="5.5" text-anchor="end" fill="#333" font-family="Liberation Sans" letter-spacing="-0.1">100.00%</text><line x1="97" y1="287.1" x2="100" y2="287.1" stroke="#555" stroke-width="0.8"/><text x="96.4" y="289.1" font-size="5.5" text-anchor="end" fill="#333" font-family="Liberation Sans" letter-spacing="-0.1">80.00%</text><line x1="97" y1="337.3" x2="100" y2="337.3" stroke="#555" stroke-width="0.8"/><text x="96.4" y="339.3" font-size="5.5" text-anchor="end" fill="#333" font-family="Liberation Sans" letter-spacing="-0.1">60.00%</text><line x1="97" y1="387.5" x2="100" y2="387.5" stroke="#555" stroke-width="0.8"/><text x="96.4" y="389.5" font-size="5.5" text-anchor="end" fill="#333" font-family="Liberation Sans" letter-spacing="-0.1">40.00%</text><line x1="97" y1="437.7" x2="100" y2="437.7" stroke="#555" stroke-width="0.8"/><text x="96.4" y="439.7" font-size="5.5" text-anchor="end" fill="#333" font-family="Liberation Sans" letter-spacing="-0.1">20.00%</text><line x1="97" y1="487.9" x2="100" y2="487.9" stroke="#555" stroke-width="0.8"/><text x="96.4" y="489.9" font-size="5.5" text-anchor="end" fill="#333" font-family="Liberation Sans" letter-spacing="-0.1">0.00%</text><line x1="103.4" y1="487.5" x2="103.4" y2="490" stroke="#555" stroke-width="0.8"/><text x="103.4" y="496" font-size="5.5" text-anchor="middle" fill="#333" font-family="Liberation Sans" letter-spacing="-0.1">3/10/15 10:00 PM</text><line x1="203.2" y1="487.5" x2="203.2" y2="490" stroke="#555" stroke-width="0.8"/><text x="203.2" y="496" font-size="5.5" text-anchor="middle" fill="#333" font-family="Liberation Sans" letter-spacing="-0.1">3/11/15 3:00 AM</text><line x1="302.9" y1="487.5" x2="302.9" y2="490" stroke="#555" stroke-width="0.8"/><text x="302.9" y="496" font-size="5.5" text-anchor="middle" fill="#333" font-family="Liberation Sans" letter-spacing="-0.1">3/11/15 8:00 AM</text><line x1="402.6" y1="487.5" x2="402.6" y2="490" stroke="#555" stroke-width="0.8"/><text x="402.6" y="496" font-size="5.5" text-anchor="middle" fill="#333" font-family="Liberation Sans" letter-spacing="-0.1">3/11/15 1:00 PM</text><line x1="502.4" y1="487.5" x2="502.4" y2="490" stroke="#555" stroke-width="0.8"/><text x="502.4" y="496" font-size="5.5" text-anchor="middle" fill="#333" font-family="Liberation Sans" letter-spacing="-0.1">3/11/15 6:00 PM</text><line x1="602.1" y1="487.5" x2="602.1" y2="490" stroke="#555" stroke-width="0.8"/><text x="602.1" y="496" font-size="5.5" text-anchor="middle" fill="#333" font-family="Liberation Sans" letter-spacing="-0.1">3/11/15 11:00 PM</text><line x1="701.9" y1="487.5" x2="701.9" y2="490" stroke="#555" stroke-width="0.8"/><text x="701.9" y="496" font-size="5.5" text-anchor="middle" fill="#333" font-family="Liberation Sans" letter-spacing="-0.1">3/12/15 4:00 AM</text><line x1="801.6" y1="487.5" x2="801.6" y2="490" stroke="#555" stroke-width="0.8"/><text x="801.6" y="496" font-size="5.5" text-anchor="middle" fill="#333" font-family="Liberation Sans" letter-spacing="-0.1">3/12/15 9:00 AM</text><line x1="901.4" y1="487.5" x2="901.4" y2="490" stroke="#555" stroke-width="0.8"/><text x="916.4" y="496" font-size="5.5" text-anchor="end" fill="#333" font-family="Liberation Sans" letter-spacing="-0.1">3/12/15 2:00 P</text></svg>
<svg class="a" style="left:382px;top:234px" width="8" height="11" viewBox="0 0 8 11"><path d="M0.5 0.5 L0.5 8.5 L2.5 6.8 L4 10 L5.3 9.4 L3.9 6.3 L6.5 6.2 Z" fill="#fff" stroke="#111" stroke-width="0.8"/></svg>
<div class="a" style="left:69.5px;top:500.5px;width:851px;height:11.5px;background:linear-gradient(#fce9e2,#fef7f4 85%,#fffdfc);border-top:1px solid #fbe0d5"></div>
<div class="t" style="left:72.70px;top:504px;font-size:7.6px;color:#111;font-weight:bold;letter-spacing:-0.017px;transform:scaleX(0.9936);transform-origin:0 0;">General</div>
<svg class="a" style="left:907px;top:502px" width="10" height="10" viewBox="0 0 10 10"><circle cx="4.6" cy="4.9" r="3.6" fill="#fff" stroke="#3f7cc0" stroke-width="0.9"/><text x="4.6" y="7.2" font-size="6" font-weight="bold" text-anchor="middle" fill="#3f7cc0" font-family="Liberation Sans">?</text></svg>
<div class="t" style="left:75.40px;top:519px;font-size:8px;color:#444;-webkit-text-stroke:0.12px #444;letter-spacing:-0.116px;transform:scaleX(0.9539);transform-origin:0 0;">JVM Start Time</div>
<div class="t" style="left:75.40px;top:529px;font-size:8px;color:#444;-webkit-text-stroke:0.12px #444;letter-spacing:-0.142px;transform:scaleX(0.9459);transform-origin:0 0;">JVM Version</div>
<div class="a" style="left:128px;top:516.6px;width:787.5px;height:10.4px;background:#fff;border:1px solid #dcdad8"></div>
<div class="a" style="left:128px;top:526.6px;width:787.5px;height:10.6px;background:#fff;border:1px solid #dcdad8"></div>
<div class="t" style="left:129.20px;top:519px;font-size:8px;color:#222;-webkit-text-stroke:0.12px #222;letter-spacing:-0.143px;transform:scaleX(0.9424);transform-origin:0 0;">3/12/15 2:38:36.789 PM</div>
<div class="t" style="left:129.20px;top:529px;font-size:8px;color:#222;-webkit-text-stroke:0.12px #222;letter-spacing:-0.145px;transform:scaleX(0.9381);transform-origin:0 0;">Java HotSpot(TM) 64-Bit Server VM (25.25-b02) for linux-amd64 JRE (1.8.0_25-b17), built on Sep 17 2014 17:32:11 by &quot;java_re&quot; with gcc 4.3.0 20080428 (Red Hat 4.3.0-8)</div>
<div class="a" style="left:66.5px;top:559px;width:856.5px;height:11px;background:#faefea;border-top:1px solid #c9c7c5"></div>
<div class="a" style="left:67px;top:559px;width:44px;height:11px;background:#fff;border-right:1px solid #d4d2d0"></div>
<div class="a" style="left:111px;top:559.5px;width:71px;height:10.5px;border-right:1px solid #d4d2d0"></div>
<div class="a" style="left:182px;top:559.5px;width:76px;height:10.5px;border-right:1px solid #d4d2d0"></div>
<div class="a" style="left:258px;top:559.5px;width:48px;height:10.5px;border-right:1px solid #d4d2d0"></div>
<svg class="a" style="left:68px;top:561px" width="9" height="9" viewBox="0 0 10 10"><rect x="1.5" y="1" width="7" height="5" fill="#d4f0fa"/><path d="M0.8 8.6 L1.6 6.2 Q5 3.6 8.4 6.2 L9 8.6 Z" fill="#a9c2de" stroke="#7f9fc8" stroke-width="0.5"/><path d="M2.3 8 Q5 5.6 7.7 8 Z" fill="#fff"/><polyline points="1.6,0.9 2.6,1.6 3.4,2.8 4.6,3.6 5.4,3.2 6.4,2.6 7.4,3 8.6,3.9" fill="none" stroke="#e05a6a" stroke-width="1"/><circle cx="5" cy="8.2" r="0.6" fill="#556"/></svg>
<div class="t" style="left:79.00px;top:561px;font-size:8px;color:#333;-webkit-text-stroke:0.12px #333;letter-spacing:-0.147px;transform:scaleX(0.9452);transform-origin:0 0;">Overview</div>
<svg class="a" style="left:113px;top:561px" width="10" height="9" viewBox="0 0 10 9"><circle cx="3" cy="5.5" r="3" fill="#c8902a"/><circle cx="6.5" cy="3.3" r="2.8" fill="#d9a23a"/><circle cx="3" cy="5.5" r="1" fill="#5a3a10"/><circle cx="7" cy="7" r="1.3" fill="#3a6ab0"/></svg>
<div class="t" style="left:123.60px;top:561px;font-size:8px;color:#333;-webkit-text-stroke:0.12px #333;letter-spacing:-0.033px;transform:scaleX(0.9871);transform-origin:0 0;">JVM Information</div>
<svg class="a" style="left:184.5px;top:562px" width="9" height="7" viewBox="0 0 9 7"><ellipse cx="4.5" cy="3.5" rx="4" ry="2.3" fill="#eef2f8" stroke="#8aa0c0" stroke-width="0.8"/><circle cx="4.5" cy="3.5" r="1" fill="#6a80a8"/></svg>
<div class="t" style="left:194.00px;top:561px;font-size:8px;color:#333;-webkit-text-stroke:0.12px #333;letter-spacing:-0.079px;transform:scaleX(0.9686);transform-origin:0 0;">System Properties</div>
<svg class="a" style="left:261.5px;top:561.5px" width="7" height="8" viewBox="0 0 7 8"><path d="M0.5 0.5 L6.5 4 L0.5 7.5 Z" fill="#3aa83a"/></svg>
<div class="t" style="left:270.40px;top:561px;font-size:8px;color:#333;-webkit-text-stroke:0.12px #333;letter-spacing:-0.096px;transform:scaleX(0.9636);transform-origin:0 0;">Recording</div>
<div class="a" style="left:765px;top:574px;width:1px;height:13px;background:#ffffff"></div>
<div class="a" style="left:766px;top:574px;width:1px;height:13px;background:#c4c2c0"></div>
</body></html>
